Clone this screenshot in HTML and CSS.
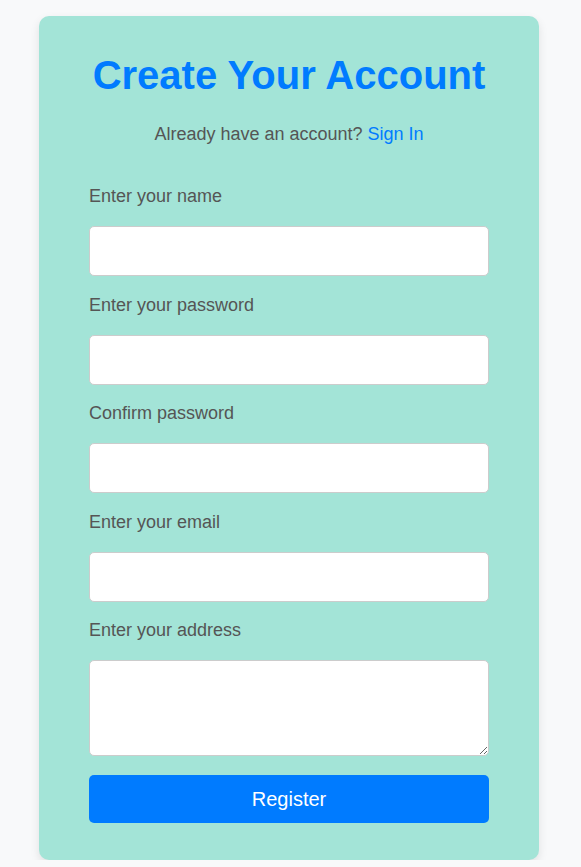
FILE: index.html
```html
<!DOCTYPE html>
<html lang="en">
<head>
<meta charset="utf-8">
<title>Create Your Account</title>
<link rel="stylesheet" href="styles.css">
</head>
<body>
<div class="card">
  <h1 class="title">Create Your Account</h1>
  <p class="subtitle">Already have an account? <a href="#" class="link">Sign In</a></p>
  <form class="form">
    <label class="label" for="name">Enter your name</label>
    <input class="field" id="name" type="text">
    <label class="label" for="pw">Enter your password</label>
    <input class="field" id="pw" type="password">
    <label class="label" for="pw2">Confirm password</label>
    <input class="field" id="pw2" type="password">
    <label class="label" for="email">Enter your email</label>
    <input class="field" id="email" type="email">
    <label class="label" for="addr">Enter your address</label>
    <textarea class="field area" id="addr"></textarea>
    <button class="btn" type="button">Register</button>
  </form>
</div>
</body>
</html>
```
FILE: styles.css
```css
html, body { margin: 0; padding: 0; }
body {
  background: #f8f9fa;
  font-family: "Liberation Sans", Arial, sans-serif;
  padding-top: 16px;
}
.card {
  width: 500px;
  box-sizing: border-box;
  margin: 0 0 0 39px;
  background: #a3e4d7;
  border-radius: 10px;
  box-shadow: 0 4px 10px rgba(0,0,0,0.1);
  padding: 36px 50px 37px;
}
.title {
  margin: 0;
  text-align: center;
  color: #007bff;
  font-size: 40px;
  line-height: 46px;
  font-weight: bold;
}
.subtitle {
  margin: 26px 0 0;
  text-align: center;
  color: #555;
  font-size: 18px;
  line-height: 21px;
}
.link { color: #007bff; text-decoration: none; }
.form { display: flex; flex-direction: column; margin-top: 41px; }
.label {
  color: #555;
  font-size: 18px;
  line-height: 21px;
  margin-bottom: 19px;
}
.field {
  display: block;
  box-sizing: border-box;
  width: 100%;
  height: 50px;
  border: 1px solid #ccc;
  border-radius: 5px;
  background: #fff;
  font-size: 16px;
  padding: 10px;
  margin: 0 0 18.5px;
  font-family: inherit;
}
.area { height: 96px; margin-bottom: 19px; resize: vertical; }
.btn {
  height: 48px;
  border: none;
  border-radius: 5px;
  background: #007bff;
  color: #fff;
  font-size: 20px;
  font-family: inherit;
  cursor: pointer;
}
```
